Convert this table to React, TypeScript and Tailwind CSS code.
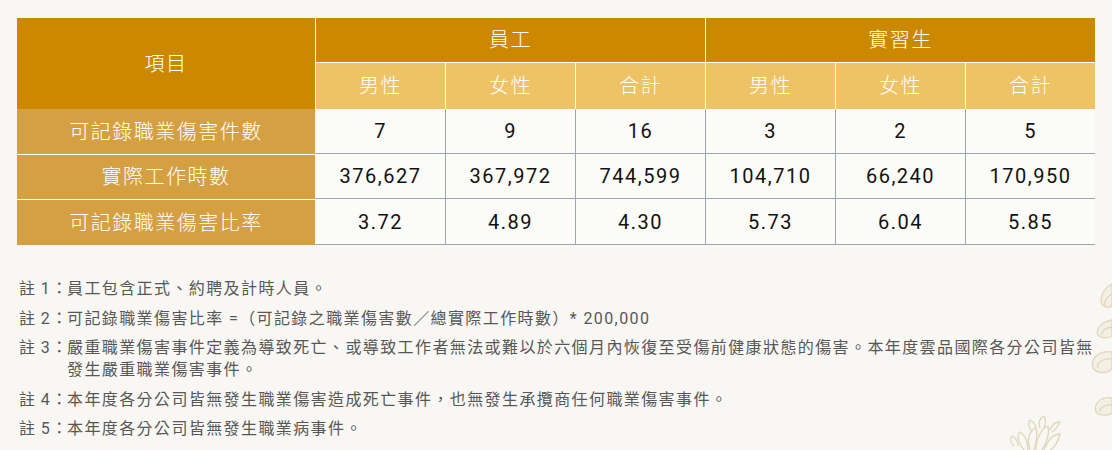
import React from "react";

const tableFont = { fontFamily: 'Roboto, "Noto Sans CJK TC", sans-serif' };

function Deco() {
  return (
    <svg
      className="absolute right-0 bottom-0 pointer-events-none opacity-80"
      width="112"
      height="180"
      viewBox="0 0 112 180"
      fill="#f3eee2"
      stroke="#ddd0b2"
      strokeWidth="1.3"
    >
      {/* lotus-like leaves on right edge */}
      <path d="M112 14 C104 18 99 27 102 34 C106 39 112 37 112 35 Z" />
      <path d="M112 24 C107 27 104 31 105 35" fill="none" />
      <path d="M112 50 C102 52 95 58 98 65 C103 70 112 67 112 65 Z" />
      <path d="M112 57 C105 58 101 61 102 65" fill="none" />
      <path d="M112 82 C100 80 90 88 93 98 C98 105 110 103 112 98 Z" />
      <path d="M112 89 C102 88 96 93 98 98" fill="none" />
      <path d="M112 128 C102 126 93 133 96 142 C101 147 112 145 112 142 Z" />
      <path d="M112 135 C104 134 99 139 100 142" fill="none" />
      {/* small chrysanthemum */}
      <g fill="none" stroke="#ddcfae" strokeWidth="1.3">
        <path d="M30 180 C26 168 30 160 36 158 C38 166 36 174 34 180" />
        <path d="M36 180 C36 168 42 158 48 156 C50 164 46 174 42 180" />
        <path d="M44 180 C48 170 54 164 60 164 C58 172 54 178 50 180" />
        <path d="M24 180 C18 172 16 166 20 162 C26 166 28 172 28 180" />
        <path d="M40 158 C38 152 40 148 44 146 C46 150 46 154 44 158" />
        <path d="M32 162 C28 156 28 152 30 150 C34 152 36 156 36 160" />
        <path d="M50 160 C52 154 56 152 60 152 C58 156 56 160 52 162" />
        <path d="M14 176 C10 172 10 168 12 166 C16 168 18 172 18 176" />
      </g>
    </svg>
  );
}

export default function App() {
  const subHeads = ["男性", "女性", "合計", "男性", "女性", "合計"];
  const rows: { label: string; vals: string[]; h: string }[] = [
    { label: "可記錄職業傷害件數", vals: ["7", "9", "16", "3", "2", "5"], h: "h-[45px]" },
    {
      label: "實際工作時數",
      vals: ["376,627", "367,972", "744,599", "104,710", "66,240", "170,950"],
      h: "h-[45px]",
    },
    { label: "可記錄職業傷害比率", vals: ["3.72", "4.89", "4.30", "5.73", "6.04", "5.85"], h: "h-[46px]" },
  ];

  const notes: { label: string; lines: string[] }[] = [
    { label: "註 1：", lines: ["員工包含正式、約聘及計時人員。"] },
    {
      label: "註 2：",
      lines: ["可記錄職業傷害比率 =（可記錄之職業傷害數／總實際工作時數）* 200,000"],
    },
    {
      label: "註 3：",
      lines: [
        "嚴重職業傷害事件定義為導致死亡、或導致工作者無法或難以於六個月內恢復至受傷前健康狀態的傷害。本年度雲品國際各分公司皆無",
        "發生嚴重職業傷害事件。",
      ],
    },
    {
      label: "註 4：",
      lines: ["本年度各分公司皆無發生職業傷害造成死亡事件，也無發生承攬商任何職業傷害事件。"],
    },
    { label: "註 5：", lines: ["本年度各分公司皆無發生職業病事件。"] },
  ];

  return (
    <div className="relative w-[1112px] h-[450px] overflow-hidden bg-[#f8f7f3]">
      <Deco />
      <div className="relative pl-[17px] pt-[18px]">
        <div
          className="grid grid-cols-[298px_repeat(6,130px)] text-[20px] tracking-[1.5px]"
          style={tableFont}
        >
          {/* header row 1 */}
          <div className="row-span-2 h-[91px] bg-[#cc8800] text-white font-light flex items-center justify-center">
            項目
          </div>
          <div className="col-span-3 h-[45px] bg-[#cc8800] text-white font-light border-l border-b border-white flex items-center justify-center">
            員工
          </div>
          <div className="col-span-3 h-[45px] bg-[#cc8800] text-white font-light border-l border-b border-white flex items-center justify-center">
            實習生
          </div>
          {/* header row 2 */}
          {subHeads.map((s, i) => (
            <div
              key={i}
              className="h-[46px] bg-[#eec365] text-white font-light border-l border-white flex items-center justify-center"
            >
              {s}
            </div>
          ))}
          {/* data rows */}
          {rows.map((r, ri) => (
            <React.Fragment key={ri}>
              <div
                className={`${r.h} bg-[#d4a041] text-white font-light flex items-center justify-center ${
                  ri > 0 ? "border-t border-white" : ""
                }`}
              >
                {r.label}
              </div>
              {r.vals.map((v, vi) => (
                <div
                  key={vi}
                  className={`${r.h} bg-[#fbfbf8] text-[#111111] border-b border-[#9da5ad] flex items-center justify-center ${
                    vi === 0 ? "border-l border-l-[#f3f3f0]" : "border-l border-l-[#9da5ad]"
                  }`}
                >
                  {v}
                </div>
              ))}
            </React.Fragment>
          ))}
        </div>
      </div>

      <div
        className="relative mt-[33px] pl-[19px] flex flex-col gap-[7.5px] text-[16px] leading-[22px] tracking-[1.4px] text-[#575757]"
        style={{ fontFamily: 'Roboto, "Noto Sans CJK TC", sans-serif' }}
      >
        {notes.map((n, i) => (
          <div key={i} className="flex">
            <div className="w-[48px] shrink-0 whitespace-nowrap [word-spacing:-1px]">{n.label}</div>
            <div className="flex flex-col whitespace-nowrap">
              {n.lines.map((l, li) => (
                <span key={li}>{l}</span>
              ))}
            </div>
          </div>
        ))}
      </div>
    </div>
  );
}
